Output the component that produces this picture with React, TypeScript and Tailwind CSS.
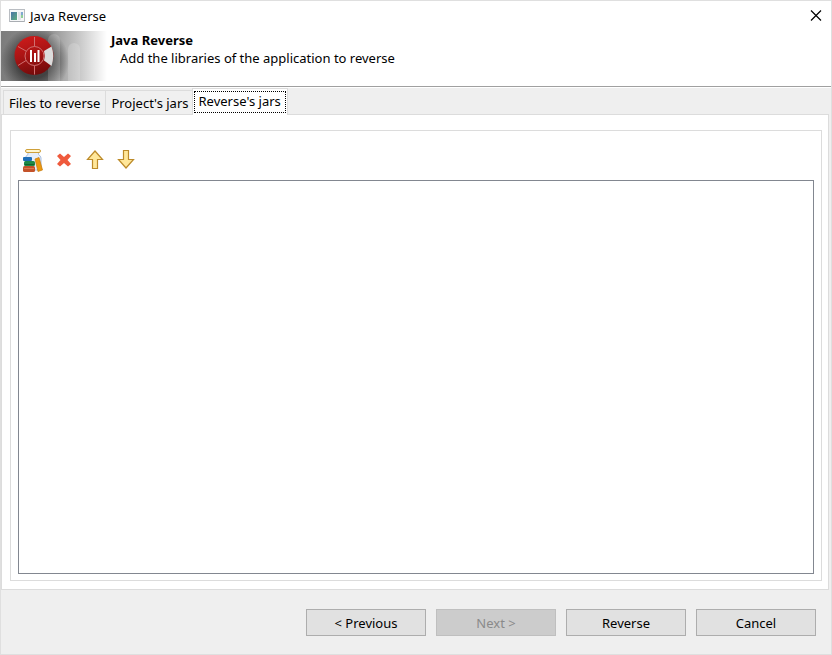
import { useState } from "react";

const TABS = ["Files to reverse", "Project's jars", "Reverse's jars"];

const BTN = "h-[27px] w-[120px] border border-[#adadad] bg-[#e1e1e1] pt-px text-[13px] leading-5 text-black disabled:border-[#bfbfbf] disabled:bg-[#cccccc] disabled:text-[#8a8a8a]";

function WindowIcon() {
  return (
    <svg width="16" height="14" viewBox="0 0 16 14" aria-hidden="true">
      <defs>
        <linearGradient id="pane" x1="0" y1="0" x2="1" y2="1">
          <stop offset="0" stopColor="#4a74a8" />
          <stop offset="1" stopColor="#5fae7c" />
        </linearGradient>
      </defs>
      <rect x="0.5" y="0.5" width="15" height="12" fill="#f6f7f8" stroke="#b9bdc2" />
      <rect x="2" y="3" width="6" height="8" fill="url(#pane)" />
      <rect x="9" y="3" width="3" height="8" fill="#e2e5e8" />
      <rect x="12" y="3" width="2" height="3" fill="#7fa8d0" />
      <rect x="12" y="6" width="2" height="3" fill="#8fcf98" />
      <rect x="1" y="12" width="14" height="1" fill="#a9adb2" />
    </svg>
  );
}

function Banner() {
  return (
    <svg width="106" height="50" viewBox="0 0 106 50" aria-hidden="true">
      <defs>
        <linearGradient id="fade" x1="0" y1="0" x2="1" y2="0">
          <stop offset="0" stopColor="#7c7c7c" />
          <stop offset="0.45" stopColor="#8f8f8f" />
          <stop offset="0.72" stopColor="#c4c4c4" />
          <stop offset="1" stopColor="#ffffff" />
        </linearGradient>
        <radialGradient id="shade">
          <stop offset="0.5" stopColor="#2a2a2a" stopOpacity="0.75" />
          <stop offset="1" stopColor="#2a2a2a" stopOpacity="0" />
        </radialGradient>
        <linearGradient id="disc" x1="0.2" y1="0" x2="0.5" y2="1">
          <stop offset="0" stopColor="#cf1b1b" />
          <stop offset="0.5" stopColor="#a81414" />
          <stop offset="1" stopColor="#740b0b" />
        </linearGradient>
      </defs>
      <rect width="106" height="50" fill="url(#fade)" />
      <circle cx="34" cy="30" r="34" fill="url(#shade)" />
      <path d="M47 50V9a6 6 0 0 1 12 0v41z" fill="#fff" opacity="0.16" />
      <path d="M67 50V18a6 6 0 0 1 12 0v32z" fill="#fff" opacity="0.18" />
      <circle cx="33" cy="24.500" r="19.500" fill="url(#disc)" />
      <path d="M43 20L50.500 15.500Q54 24.500 50.500 35L43 29.500Q44.500 24.500 43 20z" fill="#dcdcdc" />
      <g stroke="#cf7070" strokeWidth="1" fill="none">
        <circle cx="33.500" cy="25" r="9.500" />
        <path d="M33.500 6v9.500M33.500 34.500v9M17 15.500l8 4.500M17 34.500l8-5" />
      </g>
      <path d="M30 19v12M34 22v9M37.500 19v12" stroke="#fff" strokeWidth="2" />
    </svg>
  );
}

function JarIcon() {
  return (
    <svg width="20" height="24" viewBox="0 0 20 24" aria-hidden="true">
      <path d="M5 4.500v2Q2.500 8 2.500 10v12H18V10q0-2-2.500-3.500v-2z" fill="#e6eefa" stroke="#a9bfdf" />
      <rect x="2.500" y="1.500" width="15" height="3" rx="1.500" fill="#fff6cf" stroke="#cfa03a" />
      <rect x="0" y="9" width="9" height="4" rx="1" fill="#1f6fb8" />
      <rect x="1" y="13" width="11" height="5" rx="1.500" fill="#1d8a48" />
      <path d="M2 16.500h9" stroke="#12642f" />
      <rect x="0" y="18" width="12" height="6" rx="1.500" fill="#c4532a" />
      <path d="M1 20.500h10" stroke="#dc7a50" />
      <path d="M12 11l4-1.500 3.500 12.500-4.500 1.500z" fill="#eb980f" stroke="#c87a0a" strokeWidth="0.700" />
    </svg>
  );
}

function DeleteIcon() {
  return (
    <svg width="14" height="14" viewBox="0 0 14 14" aria-hidden="true">
      <path d="M3 0.500L7 4L11 0.500L14 3L10.500 7L14 11L11 13.500L7 10L3 13.500L0 11L3.500 7L0 3z" fill="#ef5a3c" />
    </svg>
  );
}

function ArrowIcon({ down }: { down?: boolean }) {
  return (
    <svg width="18" height="20" viewBox="0 0 18 20" aria-hidden="true">
      <path
        d={down ? "M6.500 0.500H11.500V9.500H16.500L9 18L1.500 9.500H6.500z" : "M9 1L16.500 9.500H11.500V18.500H6.500V9.500H1.500z"}
        fill="#ffe79a"
        stroke="#bd8b2a"
        strokeWidth="1.200"
      />
    </svg>
  );
}

const TOOLS = [
  { label: "Add jar", icon: <JarIcon /> },
  { label: "Remove", icon: <DeleteIcon /> },
  { label: "Move up", icon: <ArrowIcon /> },
  { label: "Move down", icon: <ArrowIcon down /> },
];

export default function App() {
  const [tab, setTab] = useState(2);

  return (
    <div className="flex min-h-screen flex-col border border-[#dfdfdf] bg-[#efefef] font-['Noto_Sans',sans-serif] text-[13px] leading-5 text-black">
      <header className="border-b border-[#a0a0a0] bg-white pb-[5px]">
        <div className="flex h-[30px] items-center gap-[5px] pr-[9px] pl-2">
          <WindowIcon />
          <span className="flex-1">Java Reverse</span>
          <button aria-label="Close">
            <svg width="12" height="12" viewBox="0 0 12 12" aria-hidden="true">
              <path d="M1 0.500l10 10M11 0.500l-10 10" stroke="#000" strokeWidth="1.200" />
            </svg>
          </button>
        </div>
        <div className="flex gap-1">
          <Banner />
          <div className="leading-[18px]">
            <h1 className="font-bold">Java Reverse</h1>
            <p className="pl-[9px]">Add the libraries of the application to reverse</p>
          </div>
        </div>
      </header>

      <main className="flex flex-1 flex-col border-t border-white pr-[2px]">
        <div role="tablist" className="flex h-[26px] items-end pl-[2px]">
          {TABS.map((t, i) => (
            <button
              key={t}
              role="tab"
              aria-selected={tab === i}
              onClick={() => setTab(i)}
              className={tab === i
                ? "relative -mx-[2px] -mb-px h-[27px] border border-b-0 border-[#dcdcdc] bg-white px-px pb-px"
                : "h-6 border border-r-0 border-b-0 border-[#dcdcdc] bg-[#f0f0f0] px-[5px]"}
            >
              {tab === i ? <span className="block border border-dotted border-black px-1 pb-px leading-[19px]">{t}</span> : t}
            </button>
          ))}
        </div>
        <div role="tabpanel" className="flex flex-1 flex-col border border-[#dcdcdc] bg-white pt-[15px] pr-[6px] pb-2 pl-2">
          <div className="flex flex-1 flex-col border border-[#dcdcdc] px-[7px] pt-4 pb-[6px]">
            <div className="flex h-[33px] gap-[3px] pl-px">
              {TOOLS.map(t => (
                <button key={t.label} aria-label={t.label} className="flex h-[26px] w-7 items-center justify-center">{t.icon}</button>
              ))}
            </div>
            <ul aria-label="Reverse's jars" className="min-h-40 flex-1 border border-[#828790] bg-white" />
          </div>
        </div>
      </main>

      <footer className="flex justify-end gap-[10px] pt-[19px] pr-[15px] pb-[18px]">
        <button className={BTN}>&lt; Previous</button>
        <button className={BTN} disabled>Next &gt;</button>
        <button className={BTN}>Reverse</button>
        <button className={BTN}>Cancel</button>
      </footer>
    </div>
  );
}
